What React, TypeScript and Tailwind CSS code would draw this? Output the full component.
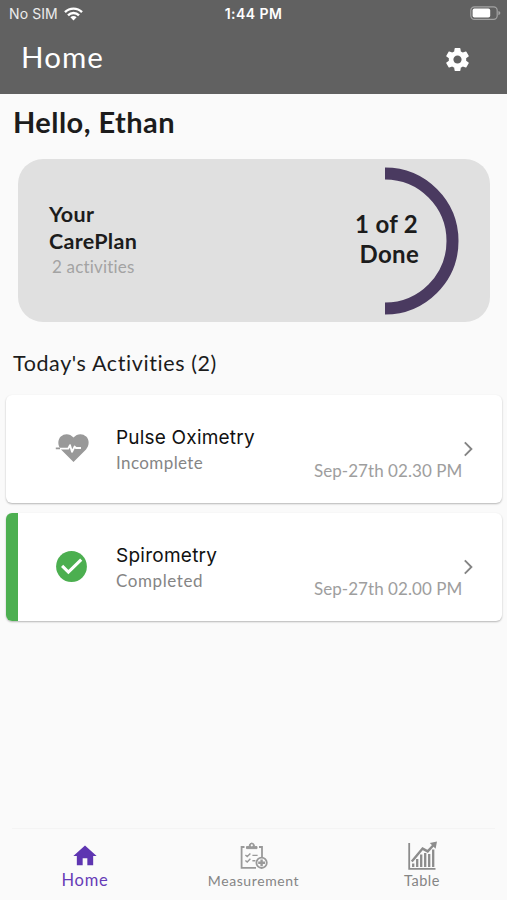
import React from "react";

function Wifi() {
  return (
    <svg className="ml-[6px] h-[14px] w-[19px]" viewBox="0 0 19 14" fill="none" stroke="#fff">
      <path d="M1 5.2 A12 12 0 0 1 18 5.2" strokeWidth="2.4" />
      <path d="M4 8.3 A7.8 7.8 0 0 1 15 8.3" strokeWidth="2.4" />
      <path d="M9.5 13.4 L6.4 10.3 A4.6 4.6 0 0 1 12.6 10.3 Z" fill="#fff" stroke="none" />
    </svg>
  );
}

function Battery() {
  return (
    <svg className="h-[15px] w-[31px]" viewBox="0 0 31 15">
      <rect x="0.8" y="0.8" width="26.4" height="12.6" rx="3.6" fill="none" stroke="#a3a3a3" strokeWidth="1.2" />
      <rect x="2.6" y="2.6" width="17.6" height="9" rx="1.8" fill="#fff" />
      <path d="M28.4 5 Q30.4 5.6 30.4 7.1 Q30.4 8.6 28.4 9.2Z" fill="#a3a3a3" />
    </svg>
  );
}

function Gear() {
  return (
    <svg className="mt-[5px] h-[29px] w-[29px]" viewBox="0 0 24 24" fill="#fff">
      <path d="M19.14 12.94c.04-.3.06-.61.06-.94 0-.32-.02-.64-.07-.94l2.03-1.58a.49.49 0 0 0 .12-.61l-1.92-3.32a.488.488 0 0 0-.59-.22l-2.39.96c-.5-.38-1.03-.7-1.62-.94l-.36-2.54a.484.484 0 0 0-.48-.41h-3.84c-.24 0-.43.17-.47.41l-.36 2.54c-.59.24-1.13.57-1.62.94l-2.39-.96c-.22-.08-.47 0-.59.22L2.74 8.87c-.12.21-.08.47.12.61l2.03 1.58c-.05.3-.09.63-.09.94s.02.64.07.94l-2.03 1.58a.49.49 0 0 0-.12.61l1.92 3.32c.12.22.37.29.59.22l2.39-.96c.5.38 1.03.7 1.62.94l.36 2.54c.05.24.24.41.48.41h3.84c.24 0 .44-.17.47-.41l.36-2.54c.59-.24 1.13-.56 1.62-.94l2.39.96c.22.08.47 0 .59-.22l1.92-3.32c.12-.22.07-.47-.12-.61l-2.01-1.58zM12 15.4c-1.87 0-3.4-1.53-3.4-3.4s1.53-3.4 3.4-3.4 3.4 1.53 3.4 3.4-1.53 3.4-3.4 3.4z" />
    </svg>
  );
}

function HeartPulse() {
  return (
    <svg className="-mt-[2px] -ml-[1px] h-[30px] w-[35px]" viewBox="0 0 35 30">
      <path d="M18.5 29 L6 16.5 C2.5 12.5 2.5 7 5.8 3.6 C9.4 0 15 .4 18.5 4.6 C22 .4 27.6 0 31.2 3.6 C34.5 7 34.5 12.5 31 16.5 Z" fill="#999" />
      <path d="M3 15.6 H13.2 L15 12.2 L17 18.8 L19.6 13.6 L21 15 H26" fill="none" stroke="#fff" strokeWidth="1.9" strokeLinejoin="round" />
      <path d="M0.8 15.4 H5" stroke="#999" strokeWidth="1.8" />
    </svg>
  );
}

function CheckCircle() {
  return (
    <svg className="h-[31px] w-[31px]" viewBox="0 0 31 31">
      <circle cx="15.5" cy="15.5" r="15.4" fill="#4caf50" />
      <path d="M6.1 14.8 L12.4 21 L25.2 8.6" fill="none" stroke="#fff" strokeWidth="3.1" />
    </svg>
  );
}

function Chevron() {
  return (
    <svg className="h-[16px] w-[10px]" viewBox="0 0 10 16" fill="none" stroke="#858585" strokeWidth="1.9">
      <path d="M0.8 1.4 L7.4 8 L0.8 14.6" />
    </svg>
  );
}

function ClipboardPlus() {
  return (
    <svg className="h-[28px] w-[28px]" viewBox="0 0 28 28" fill="none" stroke="#999" strokeWidth="1.8">
      <path d="M4.5 5 H1.6 V25.8 H16" />
      <path d="M19 5 H22 V15" />
      <path d="M6.5 6.6 V4.6 H9 Q9.3 1 11.8 1 Q14.3 1 14.6 4.6 H17 V6.6 Z" fill="#999" strokeWidth="1" />
      <circle cx="11.8" cy="3.3" r="1.1" fill="#fafafa" stroke="none" />
      <path d="M5.4 13 L7.2 14.6 L10.4 11.4 M5.4 18.4 L7.2 20 L10.4 16.8 M12.4 13.4 H17.6 M12.4 18.8 H15.4" strokeWidth="1.4" />
      <circle cx="21.6" cy="20.8" r="5.2" strokeWidth="1.8" />
      <path d="M21.6 17.4 V24.2 M18.2 20.8 H25" strokeWidth="2.4" />
    </svg>
  );
}

function GrowthChart() {
  return (
    <svg className="h-[30px] w-[30px]" viewBox="0 0 30 30" fill="none" stroke="#8c8c8c">
      <path d="M2.2 2 V27.8 H28.5" strokeWidth="1.8" />
      <path d="M4.8 20.5 L15.6 7.6 L20.7 10.4 L26.6 4" strokeWidth="2.4" />
      <path d="M22.8 2 L30 0.6 L28.6 7.8 Z" fill="#8c8c8c" stroke="none" />
      <path d="M6.2 26 V22.5 M10.2 26 V18 M14.2 26 V13.6 M18.2 26 V12 M22.2 26 V13 M26.2 26 V8.6" strokeWidth="2.3" />
    </svg>
  );
}

type ActivityProps = { title: string; status: string; time: string; done?: boolean; titleClass: string; statusClass: string };

function Activity({ title, status, time, done, titleClass, statusClass }: ActivityProps) {
  return (
    <div className="flex h-[108px] overflow-hidden rounded-[6px] bg-white shadow-[0_1px_2px_rgba(0,0,0,0.28)]">
      <div className={done ? "w-[12px] bg-[#4caf50]" : "w-[12px]"} />
      <div className="flex w-[98px] items-center pl-[38px]">{done ? <CheckCircle /> : <HeartPulse />}</div>
      <div className="flex flex-1 flex-col pt-[30px]">
        <div className={`font-[Inter,sans-serif] text-[19px] leading-[26px] text-[#111] ${titleClass}`}>{title}</div>
        <div className={`text-[17px] leading-[24px] text-[#858585] ${statusClass}`}>{status}</div>
      </div>
      <div className="flex pt-[64px]">
        <div className="w-[149px] text-[17px] leading-[24px] tracking-[0.05px] whitespace-nowrap text-[#9e9e9e]">{time}</div>
      </div>
      <div className="flex w-[39px] items-center pl-[1px]">
        <Chevron />
      </div>
    </div>
  );
}

export default function App() {
  return (
    <div className="flex h-[900px] w-[507px] flex-col overflow-hidden bg-[#fafafa] font-[Lato,sans-serif] text-[#1c1c1c]">
      <header className="flex h-[94px] shrink-0 flex-col bg-[#616161] text-white">
        <div className="grid h-[27px] grid-cols-3 items-center pr-[6px] pl-[9px] font-[Inter,sans-serif] text-[14px]">
          <div className="flex items-center text-[#ececec]">
            <span className="tracking-[0.1px]">No SIM</span>
            <Wifi />
          </div>
          <div className="-ml-[3px] text-center font-semibold tracking-[0.45px]">1:44 PM</div>
          <div className="flex justify-end">
            <Battery />
          </div>
        </div>
        <div className="flex h-[60px] items-center justify-between pr-[35px] pl-[21px]">
          <h1 className="-mt-[1px] text-[29.5px] leading-[36px] tracking-[1.1px]">Home</h1>
          <Gear />
        </div>
      </header>

      <main className="flex flex-1 flex-col">
        <h2 className="mt-[10px] ml-[13px] text-[29px] leading-[36px] font-bold tracking-[0.45px]">Hello, Ethan</h2>
        <section className="mt-[19px] ml-[18px] flex h-[163px] w-[472px] rounded-[25px] bg-[#e0e0e0]">
          <div className="flex-1 pt-[42px] pl-[31px]">
            <div className="text-[21.5px] leading-[27px] font-bold tracking-[0.3px]">Your<br />CarePlan</div>
            <div className="ml-[3px] text-[17px] leading-[23px] tracking-[0.18px] text-[#a3a3a3]">2 activities</div>
          </div>
          <div className="relative mt-[8px] mr-[31px] h-[148px] w-[149px]">
            <svg className="h-[148px] w-[149px]" viewBox="0 0 149 148">
              <path d="M75 6.5 A67.5 67.5 0 0 1 75 141.5" fill="none" stroke="#4a3a60" strokeWidth="12" />
            </svg>
            <div className="absolute top-[42px] right-[40px] text-right text-[24px] leading-[29.5px] font-bold tracking-[0.3px] whitespace-nowrap">
              <div className="pr-[1px]">1 of 2</div>
              <div>Done</div>
            </div>
          </div>
        </section>
        <h3 className="mt-[27px] ml-[13px] text-[21.5px] leading-[28px] tracking-[0.6px]">Today's Activities (2)</h3>
        <div className="mr-[5px] ml-[6px] mt-[18px] flex flex-col gap-[9.5px]">
          <Activity title="Pulse Oximetry" status="Incomplete" time="Sep-27th 02.30 PM" titleClass="tracking-[0.2px]" statusClass="tracking-[0.4px]" />
          <Activity title="Spirometry" status="Completed" time="Sep-27th 02.00 PM" done titleClass="tracking-[0.25px]" statusClass="tracking-[0.6px]" />
        </div>
      </main>

      <nav className="mx-[12px] grid h-[72px] shrink-0 grid-cols-[146px_1fr_146px] border-t border-[#f4f4f4] text-[#858585]">
        <div className="flex flex-col items-center pt-[13px] text-[#673ab7]">
          <svg className="h-[28px] w-[28px]" viewBox="0 0 24 24" fill="#5e35b1">
            <path d="M10 20v-6h4v6h5v-8h3L12 3 2 12h3v8z" />
          </svg>
          <span className="text-[16.5px] leading-[20px] tracking-[0.8px]">Home</span>
        </div>
        <div className="flex flex-col items-center pt-[13px]">
          <ClipboardPlus />
          <span className="text-[14px] leading-[22px] tracking-[0.6px]">Measurement</span>
        </div>
        <div className="flex flex-col items-center pt-[12px]">
          <GrowthChart />
          <span className="text-[14.5px] leading-[20px] tracking-[0.5px]">Table</span>
        </div>
      </nav>
    </div>
  );
}
